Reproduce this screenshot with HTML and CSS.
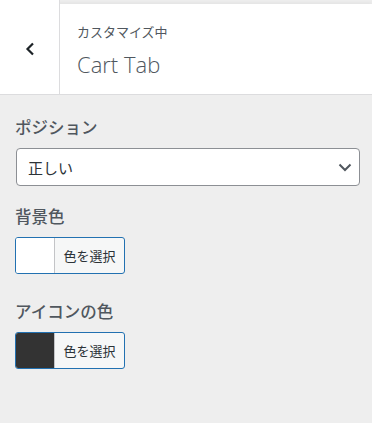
FILE: index.html
```html
<!DOCTYPE html>
<html lang="ja">
<head>
  <meta charset="UTF-8">
  <meta name="viewport" content="width=device-width, initial-scale=1.0">
  <title>Cart Tab</title>
  <link rel="stylesheet" href="styles.css">
</head>
<body>

<div class="panel">
  <div class="panel-head">
    <button class="back" aria-label="戻る">
      <svg width="12" height="14" viewBox="0 0 12 14"><path d="M9 1.5 L3.5 7 L9 12.5" fill="none" stroke="#1d2327" stroke-width="2.2"/></svg>
    </button>
    <div class="title">
      <span class="sub">カスタマイズ中</span>
      <span class="name">Cart Tab</span>
    </div>
  </div>

  <div class="controls">
    <div class="control">
      <label class="label">ポジション</label>
      <div class="select">
        <span>正しい</span>
        <svg width="14" height="9" viewBox="0 0 14 9"><path d="M1.5 1.5 L7 7 L12.5 1.5" fill="none" stroke="#50575e" stroke-width="2"/></svg>
      </div>
    </div>

    <div class="control color">
      <label class="label">背景色</label>
      <button class="color-btn">
        <span class="swatch white"></span>
        <span class="btn-text">色を選択</span>
      </button>
    </div>

    <div class="control color">
      <label class="label">アイコンの色</label>
      <button class="color-btn">
        <span class="swatch dark"></span>
        <span class="btn-text">色を選択</span>
      </button>
    </div>
  </div>
</div>

</body>
</html>
```

FILE: styles.css
```css
body {
  margin: 0;
  background: #eee;
  font-family: 'Noto Sans CJK JP', 'Noto Sans', sans-serif;
  color: #50575e;
}

.panel {
  padding-top: 4px;
}

.panel-head {
  display: flex;
  height: 90px;
  background: #fff;
  border-bottom: 1px solid #dcdcde;
  box-shadow: 0 -2px 3px rgba(0, 0, 0, 0.04);
}

.back {
  width: 60px;
  margin-top: -4px;
  border: none;
  border-right: 1px solid #dcdcde;
  background: #fff;
  display: flex;
  align-items: center;
  justify-content: center;
  padding: 4px 0 0 0;
}

.title {
  display: flex;
  flex-direction: column;
  padding: 18px 0 0 17px;
}

.sub {
  font-size: 13px;
  line-height: 20px;
  color: #50575e;
}

.name {
  font-family: 'Open Sans', 'Noto Sans', sans-serif;
  font-weight: 300;
  font-size: 22px;
  line-height: 30px;
  margin-top: 7px;
  color: #50575e;
}

.controls {
  padding: 20px 12px 0 15px;
}

.control {
  margin-bottom: 18px;
}

.control.color {
  margin-bottom: 25px;
}

.label {
  display: block;
  font-size: 16.5px;
  font-weight: 500;
  line-height: 24px;
  margin-bottom: 9px;
  color: #50575e;
}

.select {
  margin-left: 1px;
  height: 36px;
  border: 1px solid #8c8f94;
  border-radius: 4px;
  background: #fff;
  display: flex;
  align-items: center;
  justify-content: space-between;
  padding: 0 7px 0 11px;
  font-size: 15px;
  color: #2c3338;
}

.color-btn {
  display: flex;
  width: 110px;
  height: 37px;
  padding: 0;
  border: 1px solid #2271b1;
  border-radius: 3px;
  background: #f6f7f7;
  overflow: hidden;
  font-family: inherit;
}

.swatch {
  width: 38px;
  height: 100%;
  border-right: 1px solid #c3c4c7;
}

.swatch.white {
  background: #fff;
}

.swatch.dark {
  background: #333;
}

.btn-text {
  flex: 1;
  align-self: center;
  font-size: 13px;
  color: #2c3338;
}
```
